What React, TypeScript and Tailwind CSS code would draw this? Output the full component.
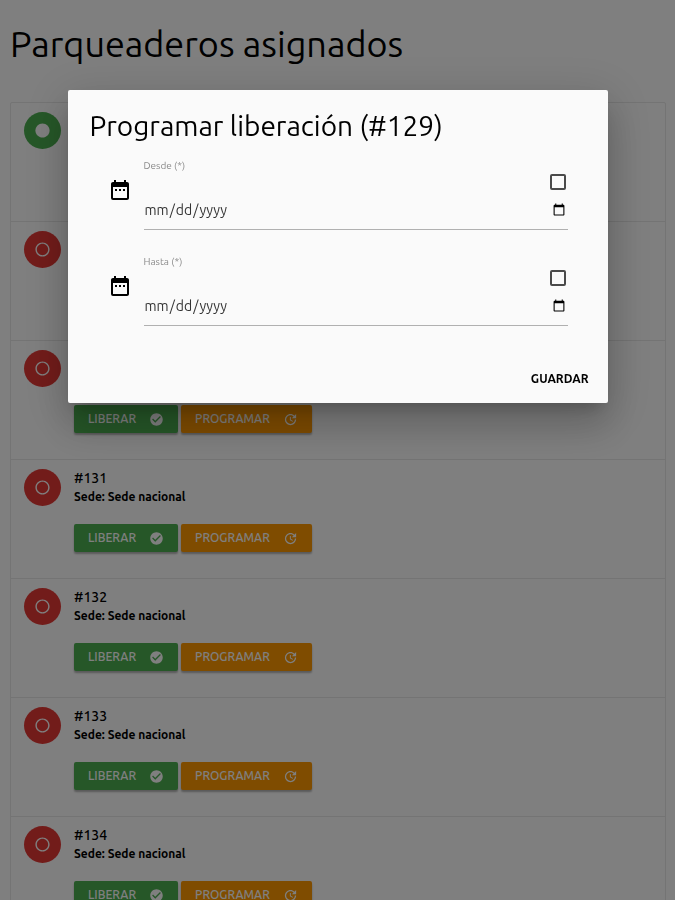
import React from 'react';
import { MdCheckCircle, MdDateRange, MdLens, MdRadioButtonUnchecked, MdUpdate } from 'react-icons/md';

interface Parking {
  id: number;
  sede: string;
  free: boolean;
}

const parkings: Parking[] = [
  { id: 128, sede: 'Sede nacional', free: true },
  { id: 129, sede: 'Sede nacional', free: false },
  { id: 130, sede: 'Sede nacional', free: false },
  { id: 131, sede: 'Sede nacional', free: false },
  { id: 132, sede: 'Sede nacional', free: false },
  { id: 133, sede: 'Sede nacional', free: false },
  { id: 134, sede: 'Sede nacional', free: false },
];

const buttonClass =
  'flex h-7 items-center gap-[13px] rounded-xs px-[14px] text-xs font-medium text-white shadow-[0_2px_2px_rgba(0,0,0,0.3)]';

const ParkingRow: React.FC<{ parking: Parking }> = ({ parking }) => (
  <li className="flex gap-[13px] border-b border-[#e8e8e8] pt-[9px] pb-[26px] pl-[13px]">
    <div
      className={`flex h-[37px] w-[37px] shrink-0 items-center justify-center rounded-full text-white ${
        parking.free ? 'bg-[#4caf50]' : 'bg-[#e53935]'
      }`}
    >
      {parking.free ? <MdLens size={17} /> : <MdRadioButtonUnchecked size={17} />}
    </div>
    <div>
      <h2 className="text-sm leading-[18px] font-medium">#{parking.id}</h2>
      <p className="text-xs leading-5 font-semibold">Sede: {parking.sede}</p>
      <div className="mt-[17px] flex gap-[3px]">
        <button type="button" className={`${buttonClass} bg-[#4caf50]`}>
          LIBERAR
          <MdCheckCircle size={15} />
        </button>
        <button type="button" className={`${buttonClass} bg-[#ff9800]`}>
          PROGRAMAR
          <MdUpdate size={15} />
        </button>
      </div>
    </div>
  </li>
);

const DateField: React.FC<{ id: string; label: string }> = ({ id, label }) => (
  <div className="flex gap-3">
    <MdDateRange size={24} className="mt-5 shrink-0 text-black" />
    <div className="grow border-b border-[#b0b0b0]">
      <label htmlFor={id} className="block h-4 text-[10px] leading-4 text-[#8a8a8a]">
        {label}
      </label>
      <div className="flex justify-end pr-[2px]">
        <input
          type="checkbox"
          aria-label={`Habilitar ${label}`}
          className="h-4 w-4 appearance-none rounded-xs border-2 border-[#4a4a4a] checked:bg-[#4a4a4a]"
        />
      </div>
      <input
        id={id}
        type="date"
        className="mt-1 mb-[3px] block h-8 w-full text-sm text-[#333] outline-none"
      />
    </div>
  </div>
);

const ScheduleModal: React.FC = () => (
  <div className="fixed inset-0 bg-black/50 pt-[90px]">
    <div
      role="dialog"
      aria-labelledby="modal-title"
      className="mx-auto w-4/5 rounded-xs bg-[#fafafa] shadow-[0_24px_38px_3px_rgba(0,0,0,0.14),0_9px_46px_8px_rgba(0,0,0,0.12),0_11px_15px_-7px_rgba(0,0,0,0.2)]"
    >
      <div className="px-[22px] pt-[18px]">
        <h2 id="modal-title" className="text-[28px] leading-9">
          Programar liberación (#129)
        </h2>
        <form className="mt-[14px] flex flex-col gap-6 px-[18px]">
          <DateField id="desde" label="Desde (*)" />
          <DateField id="hasta" label="Hasta (*)" />
        </form>
      </div>
      <div className="flex justify-end px-[19px] pt-[41px] pb-3">
        <button type="button" className="h-6 text-xs font-semibold">
          GUARDAR
        </button>
      </div>
    </div>
  </div>
);

const App: React.FC = () => {
  return (
    <div className="h-screen overflow-hidden bg-white pt-[19px] pr-[9px] pl-[10px] font-['Ubuntu','Noto_Sans',sans-serif] text-black">
      <h1 className="text-4xl leading-[50px]">Parqueaderos asignados</h1>
      <ul className="mt-[33px] rounded-xs border border-[#e8e8e8]">
        {parkings.map(p => (
          <ParkingRow key={p.id} parking={p} />
        ))}
      </ul>
      <ScheduleModal />
    </div>
  );
};

export default App;
